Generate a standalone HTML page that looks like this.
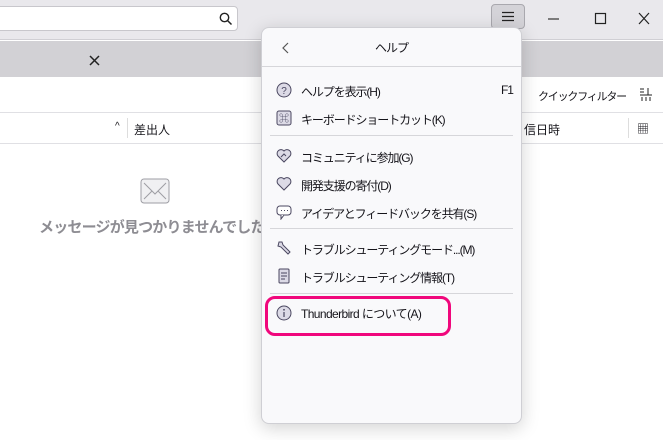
<!DOCTYPE html>
<html><head><meta charset="utf-8"><style>
*{margin:0;padding:0;box-sizing:border-box}
body{width:663px;height:440px;overflow:hidden;background:#fff;font-family:"Liberation Sans","Noto Sans CJK JP",sans-serif;color:#15141a;position:relative}
.abs{position:absolute}
.top{left:0;top:0;width:663px;height:40px;background:#e9e8ec;border-bottom:1px solid #d0cfd4}
.search{left:-4px;top:6px;width:242px;height:25px;background:#fff;border:1px solid #c8c7cc;border-radius:4px}
.ham{left:491px;top:4px;width:34px;height:25px;background:#d4d3d8;border:1px solid #a9a8ae;border-radius:4px}
.tabs{left:0;top:41px;width:663px;height:36px;background:#d2d1d5}
.tb{left:0;top:77px;width:663px;height:36px;background:#fff;border-bottom:1px solid #e0e0e4}
.hdr{left:0;top:113px;width:663px;height:31px;background:#fff;border-bottom:1px solid #e0e0e4;font-size:12px}
.menu{left:261px;top:27px;width:261px;height:397px;background:#f9f9fb;border:1px solid #cfcfd4;border-radius:8px;box-shadow:0 4px 18px rgba(0,0,0,.18)}
.it{position:absolute;left:39px;font-size:12px;color:#15141a;letter-spacing:-1.1px;white-space:nowrap}
.ic{position:absolute;left:14px;width:16px;height:16px}
.sep{position:absolute;left:8px;right:8px;height:1px;background:#d6d6da}
</style></head><body>
<div class="abs top"></div>
<div class="abs search"><svg class="abs" style="left:222px;top:5px" width="14" height="14" viewBox="0 0 14 14"><circle cx="5.5" cy="5.5" r="4.2" fill="none" stroke="#222" stroke-width="1.4"/><path d="M8.6 8.6L12.5 12.5" stroke="#222" stroke-width="1.5"/></svg></div>
<div class="abs ham"><svg class="abs" style="left:10px;top:6px" width="12" height="11"><path d="M0 1.5H12M0 5.5H12M0 9.5H12" stroke="#222" stroke-width="1.2"/></svg></div>
<svg class="abs" style="left:548px;top:12px" width="110" height="14"><path d="M0 7H11" stroke="#222" stroke-width="1.1"/><rect x="47.5" y="1.5" width="10" height="10" fill="none" stroke="#222" stroke-width="1.2"/><path d="M91 1L101 12M101 1L91 12" stroke="#222" stroke-width="1.2"/></svg>
<div class="abs tabs"><svg class="abs" style="left:89px;top:14px" width="11" height="11"><path d="M1 1L10 10M10 1L1 10" stroke="#222" stroke-width="1.5"/></svg></div>
<div class="abs tb"><span class="abs" style="left:538px;top:11px;font-size:11px;letter-spacing:-1.2px;white-space:nowrap">クイックフィルター</span><svg class="abs" style="left:640px;top:11px" width="12" height="14"><path d="M0 1H4M0 4H4M8 0V7M0 7H12M2 9V13M6 9V13M10 9V13" stroke="#222"/></svg></div>
<div class="abs hdr"><span class="abs" style="left:115px;top:8px;font-size:10px">^</span><div class="abs" style="left:127px;top:5px;width:1px;height:20px;background:#ddd"></div><span class="abs" style="left:134px;top:8px">差出人</span><span class="abs" style="left:524px;top:8px">信日時</span><div class="abs" style="left:628px;top:5px;width:1px;height:20px;background:#ddd"></div><span class="abs" style="left:637px;top:7px;font-size:12px">▦</span></div>
<svg class="abs" style="left:140px;top:178px" width="30" height="26"><rect x="1" y="1" width="28" height="24" rx="3" fill="#f0f0f2" stroke="#9e9ea4"/><path d="M4 5L15 16L26 5M4 21L12 13M26 21L18 13" stroke="#9e9ea4" fill="none"/></svg>
<div class="abs" style="left:39px;top:216px;font-size:15px;color:#8e8d93;font-weight:bold;white-space:nowrap;letter-spacing:-0.8px">メッセージが見つかりませんでした</div>
<div class="abs menu">
<svg class="abs" style="left:20px;top:14px" width="8" height="12"><path d="M6 1L1 6L6 11" stroke="#555" fill="none" stroke-width="1.2"/></svg>
<div class="abs" style="left:0;right:0;top:11px;text-align:center;font-size:12px;letter-spacing:-1px">ヘルプ</div>
<div class="sep" style="top:38px;left:0;right:0"></div>
<svg class="ic" style="top:54px" viewBox="0 0 16 16"><circle cx="8" cy="8" r="7" fill="#dcdae6" stroke="#4a4760"/><text x="8" y="12" font-size="10" text-anchor="middle" fill="#4a4760" font-family="Liberation Sans">?</text></svg>
<div class="it" style="top:55px">ヘルプを表示(H)</div><div class="it" style="left:239px;top:55px">F1</div>
<svg class="ic" style="top:82px" viewBox="0 0 16 16"><rect x="1" y="1" width="14" height="14" rx="2" fill="#dcdae6" stroke="#4a4760"/><text x="8" y="12" font-size="10" text-anchor="middle" fill="#4a4760">⌘</text></svg>
<div class="it" style="top:83px">キーボードショートカット(K)</div>
<div class="sep" style="top:107px"></div>
<svg class="ic" style="top:120px" viewBox="0 0 16 16"><path d="M8 14L2 8A3.5 3.5 0 0 1 8 3A3.5 3.5 0 0 1 14 8Z" fill="#dcdae6" stroke="#4a4760"/><path d="M5 9L8 6L10 8" stroke="#4a4760" fill="none"/></svg>
<div class="it" style="top:121px">コミュニティに参加(G)</div>
<svg class="ic" style="top:148px" viewBox="0 0 16 16"><path d="M8 14L2 8A3.5 3.5 0 0 1 8 3A3.5 3.5 0 0 1 14 8Z" fill="#dcdae6" stroke="#4a4760"/></svg>
<div class="it" style="top:149px">開発支援の寄付(D)</div>
<svg class="ic" style="top:176px" viewBox="0 0 16 16"><rect x="1" y="2" width="14" height="9" rx="3" fill="#fff" stroke="#4a4760"/><path d="M5 11V15L8 11" fill="#fff" stroke="#4a4760"/><path d="M5 6.5H6M8 6.5H9M11 6.5H12" stroke="#4a4760"/></svg>
<div class="it" style="top:177px">アイデアとフィードバックを共有(S)</div>
<div class="sep" style="top:200px"></div>
<svg class="ic" style="top:212px" viewBox="0 0 16 16"><path d="M3 2L6 2L7 5L14 12L12 14L5 7L2 6Z" fill="#dcdae6" stroke="#4a4760"/></svg>
<div class="it" style="top:213px">トラブルシューティングモード...(M)</div>
<svg class="ic" style="top:240px" viewBox="0 0 16 16"><rect x="3" y="1" width="10" height="14" rx="1" fill="#dcdae6" stroke="#4a4760"/><path d="M5 5H11M5 8H11M5 11H9" stroke="#4a4760"/></svg>
<div class="it" style="top:241px">トラブルシューティング情報(T)</div>
<div class="sep" style="top:265px"></div>
<svg class="ic" style="top:277px" viewBox="0 0 16 16"><circle cx="8" cy="8" r="7" fill="#dcdae6" stroke="#4a4760"/><path d="M8 7V12" stroke="#4a4760" stroke-width="1.2"/><circle cx="8" cy="4.8" r=".9" fill="#4a4760"/></svg>
<div class="it" style="top:277px;letter-spacing:-0.6px">Thunderbird について(A)</div>
</div>
<div class="abs" style="left:265px;top:296px;width:186px;height:40px;border:3px solid #f0077c;border-radius:10px"></div>
</body></html>
